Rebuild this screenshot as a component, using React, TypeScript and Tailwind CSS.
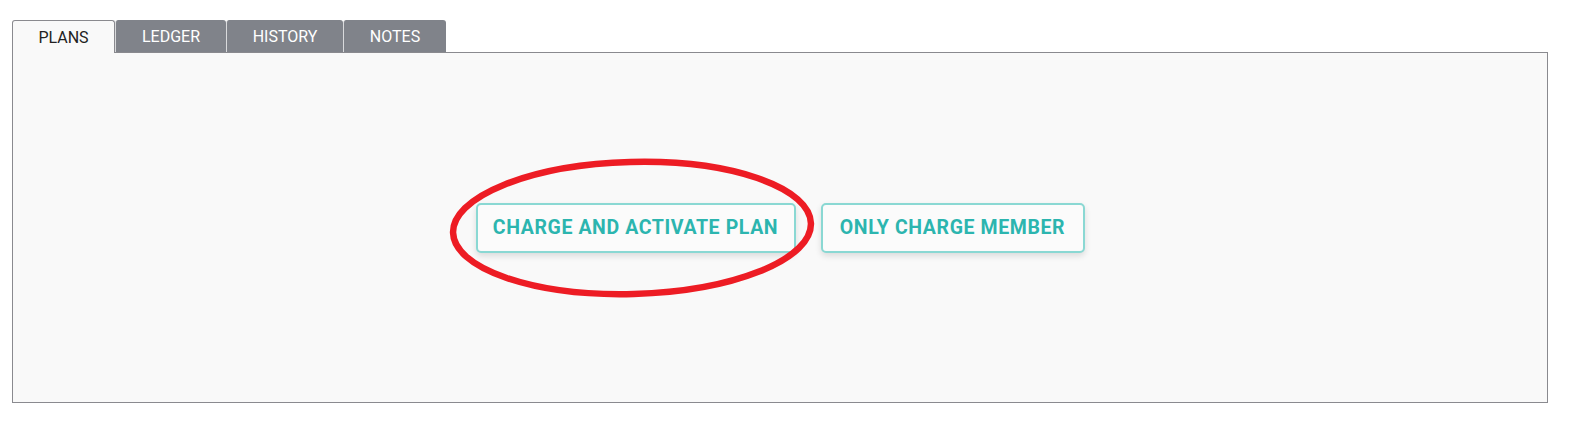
import { useState } from "react";

const tabs = ["PLANS", "LEDGER", "HISTORY", "NOTES"];
const tabWidths = ["w-[103px]", "w-[111px]", "w-[117px]", "w-[103px]"];

export default function App() {
  const [active, setActive] = useState("PLANS");

  return (
    <main className="min-h-[426px] bg-white pt-5 pl-3 pr-[29px] font-['Roboto',sans-serif]">
      {/* Tabs */}
      <div className="flex h-8 items-stretch">
        {tabs.map((t, i) => (
          <button
            key={t}
            onClick={() => setActive(t)}
            className={
              (active === t
                ? "relative z-10 -mb-px border border-b-0 border-[#8a8a8f] bg-[#f9f9f9] text-[#222]"
                : "bg-[#80838a] text-white border-l border-white/70") +
              " " +
              tabWidths[i] +
              " flex items-center justify-center rounded-t-[3px] pt-px text-[16px] leading-none"
            }
          >
            {t}
          </button>
        ))}
      </div>

      {/* Panel */}
      <div className="relative flex h-[351px] items-center justify-center gap-[25px] border border-[#8a8a8f] bg-[#f9f9f9]">
        <button className="relative h-[50px] w-[320px] rounded-[5px] border-2 border-[#8ad8d3] bg-[#fbfbfb] text-[19.5px] font-bold tracking-[0.6px] text-[#2cb5af] shadow-[0_3px_6px_rgba(0,0,0,0.12)]">
          CHARGE AND ACTIVATE PLAN
          {/* red annotation circle */}
          <svg
            className="pointer-events-none absolute left-[-30px] top-[-48px]"
            width="372"
            height="144"
            viewBox="0 0 372 144"
          >
            <ellipse
              cx="184"
              cy="71"
              rx="179"
              ry="66"
              fill="none"
              stroke="#ed1c24"
              strokeWidth="6.5"
              transform="rotate(-1.5 184 71)"
            />
          </svg>
        </button>
        <button className="h-[50px] w-[264px] rounded-[5px] border-2 border-[#8ad8d3] bg-[#fbfbfb] text-[19.5px] font-bold tracking-[0.6px] text-[#2cb5af] shadow-[0_3px_6px_rgba(0,0,0,0.12)]">
          ONLY CHARGE MEMBER
        </button>
      </div>
    </main>
  );
}
